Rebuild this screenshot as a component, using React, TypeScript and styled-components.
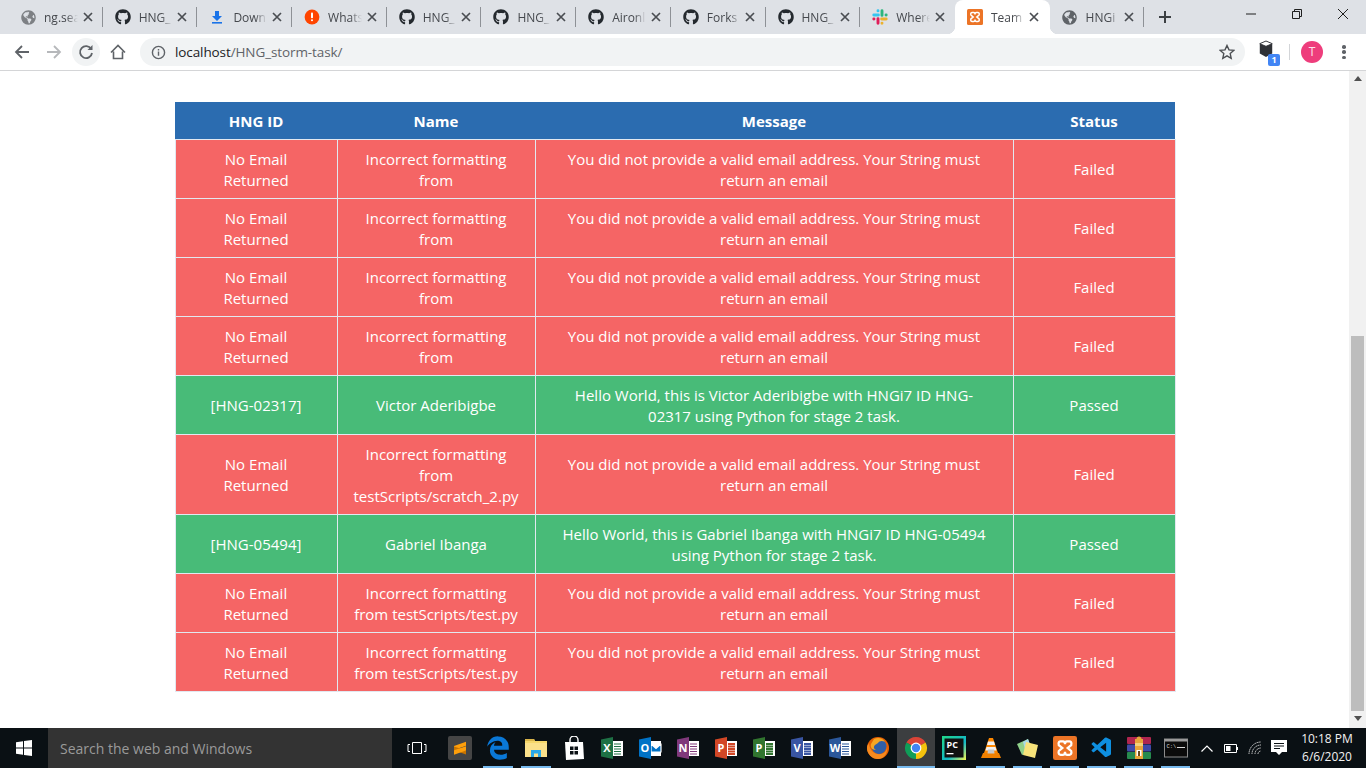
import React from "react";
import styled, { createGlobalStyle } from "styled-components";
import { FaGithub, FaGlobeAmericas } from "react-icons/fa";
import { FaEdgeLegacy } from "react-icons/fa6";
import { VscVscode } from "react-icons/vsc";

const GlobalStyle = createGlobalStyle`
  html, body { margin: 0; padding: 0; height: 100%; overflow: hidden; background: #fff; }
  #root { height: 100%; }
  * { box-sizing: border-box; }
`;

const UI = `"Open Sans", "Noto Sans", "Liberation Sans", sans-serif`;

const Screen = styled.div`
  width: 1366px; height: 768px; display: flex; flex-direction: column; font-family: ${UI};
`;

/* ---------- tabs ---------- */
const TabStrip = styled.div`
  height: 34px; background: #dee1e6; display: flex; align-items: stretch; padding-left: 8px; flex: none;
`;
const Tab = styled.div<{ $active?: boolean }>`
  position: relative; width: 94.7px; flex: none; display: flex; align-items: center; padding-left: 12px;
  background: ${p => (p.$active ? "#fff" : "transparent")};
  border-radius: ${p => (p.$active ? "8px 8px 0 0" : "0")};
  ${p => p.$active ? `
    &::before, &::after { content: ""; position: absolute; bottom: 0; width: 8px; height: 8px; }
    &::before { left: -8px; background: radial-gradient(circle at 0 0, transparent 8px, #fff 8.5px); }
    &::after { right: -8px; background: radial-gradient(circle at 100% 0, transparent 8px, #fff 8.5px); }
  ` : ""}
`;
const TabIcon = styled.span<{ $color?: string }>`
  width: 16px; height: 16px; flex: none; display: flex; align-items: center; justify-content: center;
  color: ${p => p.$color || "#24292e"};
  svg { display: block; }
`;
const TabLabel = styled.span`
  margin-left: 8px; width: 34px; flex: none; overflow: hidden; white-space: nowrap; font-size: 12px; color: #45484d;
  -webkit-mask-image: linear-gradient(90deg, #000 65%, transparent 100%);
  mask-image: linear-gradient(90deg, #000 65%, transparent 100%);
`;
const TabClose = styled.svg`
  width: 10px; height: 10px; margin-left: 4.5px; flex: none; stroke: #4a4d52; stroke-width: 1.7; fill: none;
`;
const TabDivider = styled.span<{ $hidden?: boolean }>`
  width: 1px; height: 20px; margin-left: auto; background: ${p => (p.$hidden ? "transparent" : "#8e9196")}; flex: none;
`;
const NewTab = styled.svg`
  width: 12px; height: 12px; margin-left: 15px; align-self: center; stroke: #3c4043; stroke-width: 2; flex: none;
`;
const WindowButtons = styled.div`
  margin-left: auto; display: flex;
`;
const WindowButton = styled.div`
  width: 46px; height: 28px; display: flex; align-items: center; justify-content: center;
  svg { fill: none; stroke: #1f1f1f; stroke-width: 1; display: block; }
`;

/* ---------- toolbar ---------- */
const Toolbar = styled.div`
  height: 37px; flex: none; background: #fff; border-bottom: 1px solid #d4d5d7; display: flex; align-items: flex-start;
  padding: 4px 0 0 6px;
`;
const NavSlot = styled.div<{ $round?: boolean }>`
  width: 32px; height: 28px; flex: none; display: flex; align-items: center; justify-content: center;
  position: relative;
  &::before {
    content: ""; position: absolute; left: 2px; top: 0; width: 28px; height: 28px; border-radius: 50%;
    background: ${p => (p.$round ? "#f1f3f4" : "transparent")};
  }
  svg { position: relative; display: block; fill: none; }
`;
const Omnibox = styled.div`
  width: 1105px; height: 28px; margin-left: 6px; background: #f1f3f4; border-radius: 14px; display: flex; align-items: center;
  padding: 0 10px 0 11px; flex: none;
`;
const UrlText = styled.span`
  margin-left: 9px; font-size: 13.5px; color: #5f6368; white-space: nowrap; letter-spacing: -0.1px;
  b { font-weight: 400; color: #202124; }
`;
const Star = styled.svg`
  margin-left: auto; width: 16px; height: 16px; fill: none; stroke: #4b4e52; stroke-width: 1.4; display: block;
`;
const Extension = styled.div`
  position: relative; width: 22px; height: 24px; margin-left: 13px; margin-top: 2px; flex: none;
`;
const ExtBadge = styled.span`
  position: absolute; left: 10px; top: 14px; width: 12px; height: 12px; border-radius: 2px; background: #4285f4; color: #fff;
  font-size: 9px; font-weight: 700; line-height: 12px; text-align: center;
`;
const ToolDivider = styled.span`
  width: 1px; height: 16px; background: #d3d5d8; margin: 6px 0 0 9px; flex: none;
`;
const Avatar = styled.span`
  width: 22px; height: 22px; border-radius: 50%; background: #ee3d7c; color: #fde2ec; font-size: 12px; line-height: 22px;
  text-align: center; margin: 3px 0 0 11px; flex: none;
`;
const MenuDots = styled.span`
  width: 4px; height: 14px; margin: 7px 0 0 19px; flex: none; display: flex; flex-direction: column; justify-content: space-between;
  i { width: 3.5px; height: 3.5px; border-radius: 50%; background: #5f6368; display: block; }
`;

/* ---------- page ---------- */
const Viewport = styled.div`
  flex: 1; min-height: 0; display: flex;
`;
const Page = styled.main`
  flex: 1; padding-top: 31px; display: flex; justify-content: center; background: #fff;
`;
const Table = styled.table`
  width: 1000px; height: fit-content; border-collapse: collapse; table-layout: fixed; color: #fff;
  font-size: 15px; line-height: 21px; text-align: center; margin-left: 1px;
`;
const HeadRow = styled.tr`
  background: #2b6cb0;
`;
const Th = styled.th`
  padding: 9px 16px 7px; font-weight: 700; font-size: 15px; border-bottom: 1px solid #e2e8f0;
`;
const Row = styled.tr<{ $ok: boolean }>`
  background: ${p => (p.$ok ? "#48bb78" : "#f56565")};
`;
const Td = styled.td<{ $single?: boolean }>`
  padding: ${p => (p.$single ? "8px 16px" : "9px 16px 7px")}; border: 1px solid #e2e8f0; white-space: pre-line;
`;

const Scrollbar = styled.div`
  width: 17px; flex: none; background: #f1f1f1; display: flex; flex-direction: column; align-items: center;
`;
const ArrowUp = styled.span`
  margin-top: 5px; width: 0; height: 0; border-left: 4.5px solid transparent; border-right: 4.5px solid transparent;
  border-bottom: 5px solid #505050; flex: none;
`;
const ArrowDown = styled.span`
  margin-top: auto; margin-bottom: 7px; width: 0; height: 0; border-left: 4.5px solid transparent; border-right: 4.5px solid transparent;
  border-top: 5px solid #505050; flex: none;
`;
const Thumb = styled.div`
  width: 13px; height: 375px; margin-top: 255px; background: #bdbdbd; flex: none;
`;

/* ---------- taskbar ---------- */
const Taskbar = styled.footer`
  height: 40px; flex: none; background: #0a1014; display: flex; align-items: stretch; color: #fff;
`;
const StartButton = styled.div`
  width: 48px; flex: none; display: flex; align-items: center; justify-content: center;
`;
const SearchBox = styled.div`
  width: 344px; flex: none; background: #333333; color: #9a9a9a; font-size: 14px; display: flex; align-items: center; padding-left: 12px;
`;
const TaskView = styled.div`
  width: 49px; flex: none; display: flex; align-items: center; justify-content: center;
`;
const AppSlot = styled.div<{ $narrow?: boolean; $running?: boolean; $active?: boolean }>`
  position: relative; width: ${p => (p.$narrow ? 37 : 38)}px; flex: none; display: flex; align-items: center; justify-content: center;
  background: ${p => (p.$active ? "#3c3e40" : "transparent")};
  svg { display: block; }
  ${p => p.$running || p.$active ? `
    &::after {
      content: ""; position: absolute; bottom: 0; height: 2px; background: #76b9ed;
      left: ${p.$active ? "0" : "4px"}; right: ${p.$active ? "0" : "4px"};
    }
  ` : ""}
`;
const Tray = styled.div`
  margin-left: 1px; display: flex; align-items: center; flex: 1;
`;
const TrayIcon = styled.div<{ $w: number }>`
  width: ${p => p.$w}px; flex: none; display: flex; align-items: center; justify-content: center;
  svg { display: block; }
`;
const Clock = styled.div`
  margin-left: 6px; width: 62px; text-align: center; font-size: 12px; line-height: 18px; color: #f2f2f2; white-space: nowrap;
`;

/* ---------- icons ---------- */
const CloseGlyph = () => (
  <TabClose viewBox="0 0 10 10"><path d="M1 1l8 8M9 1L1 9" /></TabClose>
);
const SlackIcon = () => (
  <svg width="16" height="16" viewBox="0 0 16 16">
    <g strokeWidth="2.9" strokeLinecap="round" fill="none">
      <path d="M1.8 6h4.6M6 1.7v0.2" stroke="#36c5f0" />
      <path d="M10 1.8v4.6M14.2 6h-0.2" stroke="#2eb67d" />
      <path d="M14.2 10H9.6M10 14.3v-0.2" stroke="#ecb22e" />
      <path d="M6 14.2V9.6M1.8 10h0.2" stroke="#e01e5a" />
    </g>
  </svg>
);
const Xampp = ({ size }: { size: number }) => (
  <svg width={size} height={size} viewBox="0 0 16 16">
    <rect width="16" height="16" rx="1.5" fill="#ec7426" />
    <path d="M5 3.500h1.700c1 0 1.300 1.200 1.300 2 0-.8.300-2 1.300-2H11c1.500 0 1.800 2.600.4 3.200L9.800 8l1.600 1.300c1.400.6 1.100 3.200-.4 3.200H9.300c-1 0-1.300-1.200-1.300-2 0 .8-.3 2-1.300 2H5c-1.500 0-1.800-2.600-.4-3.200L6.200 8 4.600 6.700C3.200 6.100 3.500 3.500 5 3.500z" fill="none" stroke="#fff" strokeWidth="1.500" />
  </svg>
);
const DownloadIcon = () => (
  <svg width="16" height="16" viewBox="0 0 16 16" fill="#1a73e8">
    <path d="M6 2h4v5h3l-5 5-5-5h3z" /><rect x="3" y="13" width="10" height="1.6" />
  </svg>
);
const AlertIcon = () => (
  <svg width="16" height="16" viewBox="0 0 16 16">
    <circle cx="8" cy="8" r="7.4" fill="#ff4500" />
    <rect x="7" y="3.500" width="2" height="5.800" rx=".8" fill="#fff" /><rect x="7" y="10.300" width="2" height="2" rx="1" fill="#fff" />
  </svg>
);
const GH = () => <FaGithub size={16} />;
const Globe = ({ c }: { c: string }) => <FaGlobeAmericas size={15} color={c} />;

const WinLogo = () => (
  <svg width="16" height="16" viewBox="0 0 16 16" fill="#fff">
    <path d="M0 2.300l7-1v6.200H0zM8 1.100L16 0v7.500H8zM0 8.500h7v6.200l-7-1zM8 8.500h8V16l-8-1.100z" />
  </svg>
);
const Sublime = () => (
  <svg width="24" height="24" viewBox="0 0 24 24">
    <rect width="24" height="24" rx="2" fill="#454545" />
    <path d="M6 10l12-4.200v4L6 14z" fill="#ff9f0a" />
    <path d="M6 10.500l12 3.900v4L6 14.200z" fill="#c87400" />
    <path d="M6 14.300l12-4v4.200l-12 4.200z" fill="#ff9f0a" />
  </svg>
);
const Folder = () => (
  <svg width="24" height="24" viewBox="0 0 24 24">
    <path d="M1 3h9l1 2h12v16H1z" fill="#f6d76b" />
    <path d="M1 3h9l1 2H1z" fill="#d9b44a" />
    <path d="M1 7h22v14H1z" fill="#fbe08a" />
    <path d="M7 21v-7h10v7h-3v-3.500h-4V21z" fill="#29a8e8" />
  </svg>
);
const Store = () => (
  <svg width="24" height="24" viewBox="0 0 24 24" fill="#fff">
    <path d="M8 6V4a4 4 0 018 0v2" fill="none" stroke="#fff" strokeWidth="1.400" />
    <path d="M3 6h18l1 17-18 1z" />
    <path d="M8 10.500h3.500V14H8zM12.500 10.500H16V14h-3.500zM8 15h3.500v3.500H8zM12.500 15H16v3.500h-3.500z" fill="#0a1014" />
  </svg>
);
const Office = ({ c, l, v }: { c: string; l: string; v?: "mail" | "lines" | "pic" }) => (
  <svg width="24" height="24" viewBox="0 0 24 24">
    <rect x="11" y="5" width="12" height="15" fill="#fff" />
    {v === "mail" ? (
      <path d="M13 8h10v8H13zM13 8l5 4.500L23 8" fill={c} stroke="#fff" strokeWidth="1.200" />
    ) : (
      <path d="M14 8h7M14 10.500h7M14 13h7M14 15.500h7M14 18h7" stroke={c} strokeWidth={v === "pic" ? 2 : 1} />
    )}
    <path d="M1 3.500L13 1v22L1 20.500z" fill={c} />
    <text x="7" y="16" textAnchor="middle" fontSize="11" fontWeight="700" fill="#fff" fontFamily={UI}>{l}</text>
  </svg>
);
const Firefox = () => (
  <svg width="24" height="24" viewBox="0 0 24 24">
    <circle cx="12" cy="12" r="11" fill="#e66000" />
    <circle cx="13" cy="10.500" r="7.500" fill="#2f5fa8" />
    <path d="M3 8c1 7 6 11 12 10 4-.7 6-4 6-7 1 6-3 12-9 12C6 23 1 18 1 12c0-2 1-4 2-4z" fill="#f58a1f" />
    <path d="M8 3c4-2 9-1 11 3-3-2-6-1-7 1l-3 2c-2 2-1 4 1 5-4 0-6-3-5-6 1-2 2-3 3-5z" fill="#f6a623" />
  </svg>
);
const Chrome = () => (
  <svg width="24" height="24" viewBox="0 0 24 24">
    <path d="M2.470 6.500A11 11 0 0121.530 6.500L12 12Z" fill="#db4437" />
    <path d="M21.530 6.500A11 11 0 0112 23L12 12Z" fill="#f4c20d" />
    <path d="M12 23A11 11 0 012.470 6.500L12 12Z" fill="#0f9d58" />
    <circle cx="12" cy="12" r="5.400" fill="#fff" />
    <circle cx="12" cy="12" r="4.200" fill="#4285f4" />
  </svg>
);
const PyCharm = () => (
  <svg width="24" height="24" viewBox="0 0 24 24">
    <defs>
      <linearGradient id="pc" x1="0" y1="0" x2="1" y2="1">
        <stop offset="0" stopColor="#21d789" /><stop offset=".6" stopColor="#12b8c8" /><stop offset="1" stopColor="#fcf84a" />
      </linearGradient>
    </defs>
    <rect width="24" height="24" fill="url(#pc)" />
    <rect x="2.500" y="2.500" width="19" height="19" fill="#111" />
    <text x="4.500" y="11.500" fontSize="9" fontWeight="700" fill="#fff" fontFamily={UI}>PC</text>
    <rect x="4.500" y="17" width="7" height="1.300" fill="#fff" />
  </svg>
);
const Vlc = () => (
  <svg width="24" height="24" viewBox="0 0 24 24">
    <path d="M10 2h4l5 15H5z" fill="#ff8800" />
    <path d="M9 5.500h6l1 3.500H8zM7.500 11h9l1 3.500h-11z" fill="#f2f2f2" />
    <path d="M4 17h16l2 5H2z" fill="#f08000" />
    <path d="M9 13.500h6l.5 4h-7z" fill="#c8c8c8" />
  </svg>
);
const Sticky = () => (
  <svg width="24" height="24" viewBox="0 0 24 24">
    <path d="M1 8l11-5 4 12-10 4z" fill="#8fd08a" />
    <path d="M7 6l5-3 3 8-6 2z" fill="#a8d8ea" />
    <path d="M10 6l12 3-3 13-12-3z" fill="#f7e37a" />
  </svg>
);
const WinRar = () => (
  <svg width="24" height="24" viewBox="0 0 24 24">
    <rect x="0" y="1" width="24" height="7" rx="1" fill="#b0264f" />
    <rect x="0" y="8.500" width="24" height="7" rx="1" fill="#3f4aa8" />
    <rect x="0" y="16" width="24" height="7" rx="1" fill="#268a4e" />
    <rect x="8" y="3" width="8" height="20" fill="#e9a63a" />
    <path d="M8 7h8v3H8z" fill="#f4d07a" />
    <rect x="9.500" y="14" width="5" height="6" fill="#fff" /><rect x="11" y="15" width="2" height="5" fill="#6b4a1c" />
    <circle cx="12" cy="3" r="2.500" fill="#e9a63a" />
  </svg>
);
const Cmd = () => (
  <svg width="24" height="24" viewBox="0 0 24 24">
    <rect x="0.500" y="3" width="23" height="18" fill="#0b0b0b" stroke="#8c8c8c" />
    <rect x="0.500" y="3" width="23" height="2.500" fill="#9a9a9a" />
    <text x="2.500" y="11.500" fontSize="5.500" fill="#d8d8d8" fontFamily="Liberation Mono, monospace">C:\.</text>
    <rect x="13" y="11" width="8" height="1" fill="#d8d8d8" />
  </svg>
);

/* ---------- data ---------- */
type TabData = { icon: React.ReactNode; label: string; color?: string; active?: boolean; noDivider?: boolean };
const tabs: TabData[] = [
  { icon: <Globe c="#7d8084" />, label: "ng.sea" },
  { icon: <GH />, label: "HNG_" },
  { icon: <DownloadIcon />, label: "Down" },
  { icon: <AlertIcon />, label: "Whats" },
  { icon: <GH />, label: "HNG_" },
  { icon: <GH />, label: "HNG_" },
  { icon: <GH />, label: "Aironl" },
  { icon: <GH />, label: "Forks" },
  { icon: <GH />, label: "HNG_" },
  { icon: <SlackIcon />, label: "Where", noDivider: true },
  { icon: <Xampp size={16} />, label: "Team", active: true, noDivider: true },
  { icon: <Globe c="#5f6368" />, label: "HNGi" },
];

const fail = { id: "No Email Returned", name: "Incorrect formatting from", msg: "You did not provide a valid email address. Your String must return an email", status: "Failed", tall: false };
const failTest = { ...fail, name: "Incorrect formatting from testScripts/test.py" };
const rows = [
  fail, fail, fail, fail,
  { id: "[HNG-02317]", name: "Victor Aderibigbe", msg: "Hello World, this is Victor Aderibigbe with HNGi7 ID HNG-\n02317 using Python for stage 2 task.", status: "Passed", tall: false },
  { ...fail, name: "Incorrect formatting from testScripts/scratch_2.py", tall: true },
  { id: "[HNG-05494]", name: "Gabriel Ibanga", msg: "Hello World, this is Gabriel Ibanga with HNGi7 ID HNG-05494\nusing Python for stage 2 task.", status: "Passed", tall: false },
  failTest, failTest,
];

const apps: { icon: React.ReactNode; running?: boolean; active?: boolean; narrow?: boolean }[] = [
  { icon: <Sublime /> },
  { icon: <FaEdgeLegacy size={24} color="#0a78d7" />, running: true },
  { icon: <Folder />, running: true },
  { icon: <Store /> },
  { icon: <Office c="#1e7145" l="X" v="lines" /> },
  { icon: <Office c="#0072c6" l="O" v="mail" /> },
  { icon: <Office c="#80397b" l="N" v="lines" /> },
  { icon: <Office c="#d24726" l="P" v="pic" /> },
  { icon: <Office c="#31752f" l="P" v="pic" /> },
  { icon: <Office c="#3955a3" l="V" v="pic" /> },
  { icon: <Office c="#2b579a" l="W" v="lines" /> },
  { icon: <Firefox /> },
  { icon: <Chrome />, active: true },
  { icon: <PyCharm />, narrow: true },
  { icon: <Vlc />, narrow: true, running: true },
  { icon: <Sticky />, narrow: true, running: true },
  { icon: <Xampp size={24} />, narrow: true, running: true },
  { icon: <VscVscode size={24} color="#0e8fe0" />, narrow: true, running: true },
  { icon: <WinRar />, narrow: true, running: true },
  { icon: <Cmd />, narrow: true, running: true },
];

export default function App() {
  return (
    <Screen>
      <GlobalStyle />
      <TabStrip>
        {tabs.map((t, i) => (
          <Tab key={i} $active={t.active}>
            <TabIcon>{t.icon}</TabIcon>
            <TabLabel>{t.label}</TabLabel>
            <CloseGlyph />
            <TabDivider $hidden={t.noDivider} />
          </Tab>
        ))}
        <NewTab viewBox="0 0 12 12"><path d="M6 0v12M0 6h12" /></NewTab>
        <WindowButtons>
          <WindowButton><svg width="10" height="10" viewBox="0 0 10 10"><path d="M0 5h10" /></svg></WindowButton>
          <WindowButton><svg width="10" height="10" viewBox="0 0 10 10"><path d="M.5 2.500h7v7h-7zM2.500 2.500v-2h7v7h-2" /></svg></WindowButton>
          <WindowButton><svg width="10" height="10" viewBox="0 0 10 10"><path d="M0 0l10 10M10 0L0 10" /></svg></WindowButton>
        </WindowButtons>
      </TabStrip>

      <Toolbar>
        <NavSlot>
          <svg width="16" height="16" viewBox="0 0 16 16" stroke="#5f6368" strokeWidth="1.800"><path d="M15 8H2M8 2L2 8l6 6" /></svg>
        </NavSlot>
        <NavSlot>
          <svg width="16" height="16" viewBox="0 0 16 16" stroke="#b6b8bb" strokeWidth="1.800"><path d="M1 8h13M8 2l6 6-6 6" /></svg>
        </NavSlot>
        <NavSlot $round>
          <svg width="16" height="16" viewBox="0 0 16 16" stroke="#5f6368" strokeWidth="1.800"><path d="M13.200 5A6 6 0 1014 9" /><path d="M14.500 1v5h-5z" fill="#5f6368" stroke="none" /></svg>
        </NavSlot>
        <NavSlot>
          <svg width="16" height="16" viewBox="0 0 16 16" stroke="#5f6368" strokeWidth="1.600"><path d="M1 8.500L8 1.500l7 7M3.500 7.500v7h9v-7" /></svg>
        </NavSlot>
        <Omnibox>
          <svg width="15" height="15" viewBox="0 0 16 16" fill="none" stroke="#5f6368" strokeWidth="1.500"><circle cx="8" cy="8" r="6.500" /><path d="M8 7v4.500M8 4.200v1.600" /></svg>
          <UrlText><b>localhost</b>/HNG_storm-task/</UrlText>
          <Star viewBox="0 0 16 16"><path d="M8 1.500l2 4.400 4.800.5-3.600 3.200 1 4.700L8 11.900l-4.200 2.400 1-4.700L1.200 6.400 6 5.900z" /></Star>
        </Omnibox>
        <Extension>
          <svg width="16" height="18" viewBox="0 0 18 20"><path d="M9 1l7 3v11l-7 4-7-4V4z" fill="#2f3136" /><path d="M2 4l7 3 7-3-7-3z" fill="#fff" stroke="#2f3136" /></svg>
          <ExtBadge>1</ExtBadge>
        </Extension>
        <ToolDivider />
        <Avatar>T</Avatar>
        <MenuDots><i /><i /><i /></MenuDots>
      </Toolbar>

      <Viewport>
        <Page>
          <Table>
            <colgroup>
              <col width="162" /><col width="198" /><col width="478" /><col width="162" />
            </colgroup>
            <thead>
              <HeadRow><Th>HNG ID</Th><Th>Name</Th><Th>Message</Th><Th>Status</Th></HeadRow>
            </thead>
            <tbody>
              {rows.map((r, i) => {
                const passed = r.status === "Passed";
                return (
                  <Row key={i} $ok={passed}>
                    <Td $single={passed || r.tall}>{r.id}</Td>
                    <Td $single={passed}>{r.name}</Td>
                    <Td $single={r.tall}>{r.msg}</Td>
                    <Td $single>{r.status}</Td>
                  </Row>
                );
              })}
            </tbody>
          </Table>
        </Page>
        <Scrollbar>
          <ArrowUp />
          <Thumb />
          <ArrowDown />
        </Scrollbar>
      </Viewport>

      <Taskbar>
        <StartButton><WinLogo /></StartButton>
        <SearchBox>Search the web and Windows</SearchBox>
        <TaskView>
          <svg width="20" height="14" viewBox="0 0 20 14" fill="none" stroke="#fff"><path d="M5.500 1.500h9v11h-9zM3 3.500H1v7h2M17 3.500h2v7h-2" /></svg>
        </TaskView>
        {apps.map((a, i) => (
          <AppSlot key={i} $narrow={a.narrow} $running={a.running} $active={a.active}>{a.icon}</AppSlot>
        ))}
        <Tray>
          <TrayIcon $w={24}><svg width="12" height="7" viewBox="0 0 12 7" fill="none" stroke="#fff" strokeWidth="1.200"><path d="M.5 6.500L6 1l5.500 5.500" /></svg></TrayIcon>
          <TrayIcon $w={24}><svg width="15" height="9" viewBox="0 0 15 9" fill="none" stroke="#fff"><path d="M.5.500h12v8H.5z" /><path d="M13.500 3v3" /><rect x="2" y="2" width="4.500" height="5" fill="#fff" stroke="none" /></svg></TrayIcon>
          <TrayIcon $w={25}><svg width="15" height="14" viewBox="0 0 15 14" fill="none" stroke="#cfcfcf" strokeDasharray="1.500 .6"><path d="M1 13a12 12 0 0112-12M4 13a9 9 0 019-9M7 13a6 6 0 016-6M10 13a3 3 0 013-3" /></svg></TrayIcon>
          <TrayIcon $w={22}><svg width="16" height="16" viewBox="0 0 16 16"><path d="M0 0h16v12h-5l-3 3-3-3H0z" fill="#fff" /><path d="M3 3.500h10M3 6h10M3 8.500h6" stroke="#0a1014" /></svg></TrayIcon>
          <Clock>10:18 PM<br />6/6/2020</Clock>
        </Tray>
      </Taskbar>
    </Screen>
  );
}
